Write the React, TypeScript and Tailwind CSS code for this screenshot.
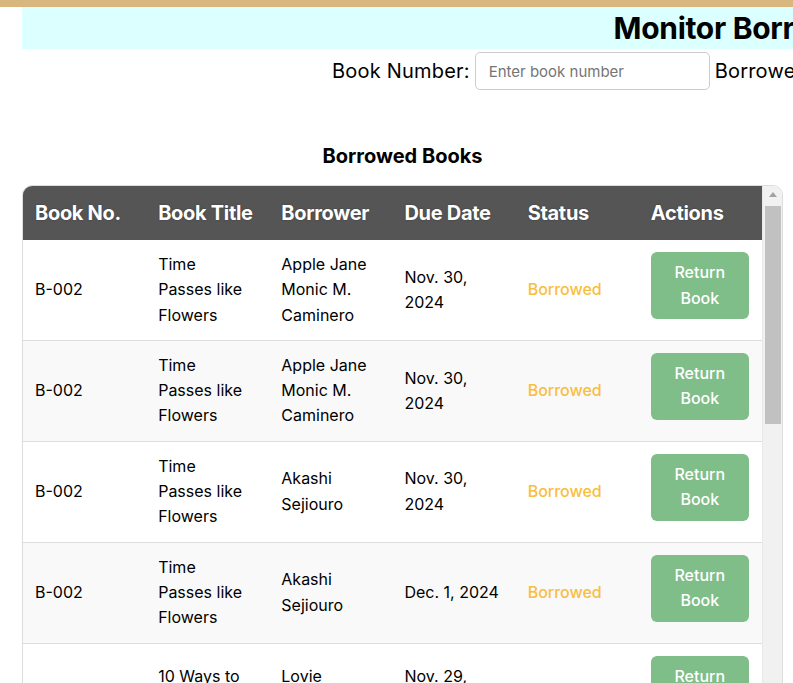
import React from "react"

type Loan = {
    no: string
    title: string[]
    borrower: string[]
    due: string[]
}

const loans: Loan[] = [
    { no: "B-002", title: ["Time", "Passes like", "Flowers"], borrower: ["Apple Jane", "Monic M.", "Caminero"], due: ["Nov. 30,", "2024"] },
    { no: "B-002", title: ["Time", "Passes like", "Flowers"], borrower: ["Apple Jane", "Monic M.", "Caminero"], due: ["Nov. 30,", "2024"] },
    { no: "B-002", title: ["Time", "Passes like", "Flowers"], borrower: ["Akashi", "Sejiouro"], due: ["Nov. 30,", "2024"] },
    { no: "B-002", title: ["Time", "Passes like", "Flowers"], borrower: ["Akashi", "Sejiouro"], due: ["Dec. 1, 2024"] },
    { no: "B-005", title: ["10 Ways to", "Relax"], borrower: ["Lovie", "Santos"], due: ["Nov. 29,", "2024"] },
    { no: "B-007", title: ["The Quiet", "Garden"], borrower: ["Mark", "Dela Cruz"], due: ["Dec. 2,", "2024"] },
]

const Lines = ({ lines }: { lines: string[] }) => (
    <>
        {lines.map((l, i) => (
            <span key={i} className="block whitespace-nowrap">{l}</span>
        ))}
    </>
)

const headers = ["Book No.", "Book Title", "Borrower", "Due Date", "Status", "Actions"]

const cell = "px-3 py-3 text-[16px] leading-[25.3px] align-middle"

// classic scrollbar look, since the list is clipped to its box
const Scrollbar = () => (
    <div className="w-[20px] shrink-0 bg-[#f1f1f1] border-l border-[#e8e8e8] flex flex-col items-center">
        <div className="h-[17px] w-full flex items-center justify-center">
            <div className="w-0 h-0 border-x-[4px] border-x-transparent border-b-[5px] border-b-[#a3a3a3]" />
        </div>
        <div className="mt-[3px] w-[16px] h-[218px] bg-[#c1c1c1]" />
    </div>
)

export default function App() {
    return (
        <div className="w-[793px] h-[683px] overflow-hidden bg-white text-black font-['Inter',sans-serif]">
            <div className="h-[7px] bg-[#d8b77e]" />

            <div className="pl-[22px]">
                {/* page header */}
                <div className="w-[1538px] h-[42px] bg-[#dcffff] flex items-center justify-center">
                    <h1 className="text-[30px] font-bold tracking-[-0.3px]">Monitor Borrowed Books</h1>
                </div>

                <div className="mt-[3px] w-[1562px] flex items-center gap-[5px] pl-[310px]">
                    <label className="text-[20px] tracking-[0.2px]">Book Number:</label>
                    <input
                        className="w-[235px] h-[38px] border border-[#ccc] rounded-[5px] px-[13px] text-[15px] placeholder:text-[#757575]"
                        placeholder="Enter book number"
                    />
                    <label className="text-[20px] tracking-[0.2px]">Borrower Name:</label>
                    <input
                        className="w-[235px] h-[38px] border border-[#ccc] rounded-[5px] px-[13px] text-[15px] placeholder:text-[#757575]"
                        placeholder="Enter borrower name"
                    />
                </div>

                {/* borrowed list */}
                <h2 className="w-[761px] mt-[51px] mb-[14px] text-center text-[20px] font-bold leading-[30px]">Borrowed Books</h2>

                <div className="w-[761px] h-[500px] flex overflow-hidden border border-[#ddd] rounded-t-[10px]">
                    <div className="flex-1 min-w-0">
                        <table className="w-full table-fixed border-collapse">
                            <thead>
                                <tr className="bg-[#555]">
                                    {headers.map((h) => (
                                        <th
                                            key={h}
                                            className="px-3 py-3 text-left text-white text-[20px] font-bold leading-[30px] tracking-[-0.3px] [text-shadow:0_0_2px_rgba(0,0,0,0.35)]"
                                        >
                                            {h}
                                        </th>
                                    ))}
                                </tr>
                            </thead>
                            <tbody>
                                {loans.map((loan, index) => (
                                    <tr key={`loan-${index}`} className={`border-b border-[#ddd] ${index % 2 === 1 ? "bg-[#f9f9f9]" : "bg-white"}`}>
                                        <td className={cell}>{loan.no}</td>
                                        <td className={cell}><Lines lines={loan.title} /></td>
                                        <td className={cell}><Lines lines={loan.borrower} /></td>
                                        <td className={cell}><Lines lines={loan.due} /></td>
                                        <td className={`${cell} font-medium text-[#f9be3d]`}>Borrowed</td>
                                        <td className="px-3 py-3 align-top">
                                            <button className="block w-[98px] px-5 py-2 rounded-[6px] bg-[#7fbd89] text-white text-[16px] font-medium leading-[25.6px]">
                                                Return Book
                                            </button>
                                        </td>
                                    </tr>
                                ))}
                            </tbody>
                        </table>
                    </div>
                    <Scrollbar />
                </div>
            </div>
        </div>
    )
}
